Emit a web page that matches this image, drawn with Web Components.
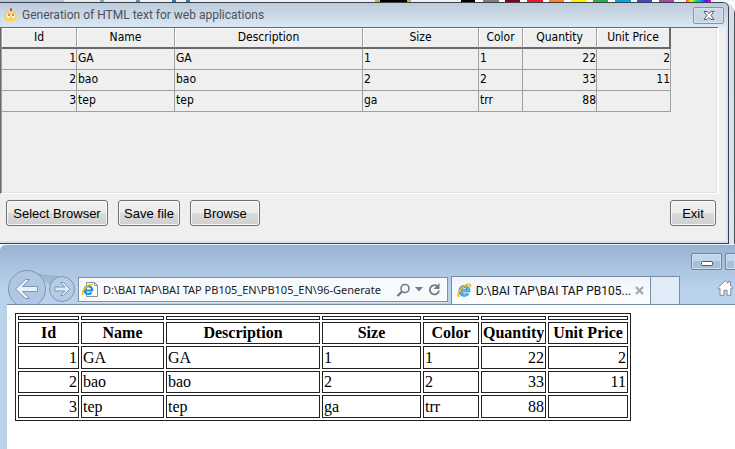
<!DOCTYPE html>
<html lang="en">
<head>
<meta charset="utf-8">
<title>Generation of HTML text for web applications</title>
<style>
html, body { margin: 0; height: 100%; }
body { overflow: hidden; background: #fff; font-family: "DejaVu Sans Condensed", "DejaVu Sans", sans-serif; }
</style>
</head>
<body>
<desk-top>
  <color-strip></color-strip>
  <app-window caption="Generation of HTML text for web applications">
    <data-grid></data-grid>
    <push-button slot="actions" style="--w:102px">Select Browser</push-button>
    <push-button slot="actions" style="--w:62px">Save file</push-button>
    <push-button slot="actions" style="--w:70px">Browse</push-button>
    <push-button slot="exit" style="--w:46px">Exit</push-button>
  </app-window>
  <browser-window slot="front" address="D:\BAI TAP\BAI TAP PB105_EN\PB105_EN\96-Generate" tab="D:\BAI TAP\BAI TAP PB105...">
    <report-table></report-table>
  </browser-window>
</desk-top>
<script>
const heads = ["Id", "Name", "Description", "Size", "Color", "Quantity", "Unit Price"];
const rows = [
  ["1", "GA", "GA", "1", "1", "22", "2"],
  ["2", "bao", "bao", "2", "2", "33", "11"],
  ["3", "tep", "tep", "ga", "trr", "88", ""]
];
const numeric = new Set([0, 5, 6]);
const cells = r => r.map((v, i) => `<td${numeric.has(i) ? ' class="n"' : ""}>${v}</td>`).join("");
const bodyRows = rows.map(r => `<tr>${cells(r)}</tr>`).join("");
const headRow = `<tr>${heads.map(h => `<th scope="col">${h}</th>`).join("")}</tr>`;
const colgroup = w => `<colgroup>${w.map(x => `<col style="width:${x}px">`).join("")}</colgroup>`;

function define(name, render) {
  customElements.define(name, class extends HTMLElement {
    constructor() { super(); this.attachShadow({ mode: "open" }); }
    connectedCallback() { this.shadowRoot.innerHTML = render(this); }
  });
}

define("desk-top", () => `
<style>
:host { display: flex; flex-direction: column; height: 100%; }
.back { display: flex; flex-direction: column; flex: none; }
</style>
<div class="back">
  <slot></slot>
</div>
<slot name="front"></slot>`);

define("color-strip", () => `
<style>
:host { display: block; height: 2px; background:
  linear-gradient(90deg, #000 0 14px, #fff 14px 22px, #7f7f7f 22px 38px, #fff 38px 44px, #880015 44px 59px, #fff 59px 66px,
    #ed1c24 66px 82px, #fff 82px 88px, #ff7f27 88px 103px, #fff 103px 110px, #fff200 110px 126px, #fff 126px 132px,
    #22b14c 132px 147px, #fff 147px 154px, #00a2e8 154px 170px, #fff 170px 176px, #3f48cc 176px 191px, #fff 191px 198px,
    #a349a4 198px 213px, #eef5fc 213px 225px, #f40 225px, #fe0 230px, #0e4 235px, #09f 240px, #60f 245px, #f0a 250px, #eef5fc 250px) 461px 0 / 300px 2px no-repeat,
  linear-gradient(90deg, #dba74e 0 5px, #000 5px 32px, #dba74e 32px 36px, transparent 36px) 375px 0 / 40px 2px no-repeat,
  linear-gradient(90deg, #b4c6de 0 64px, #e6edf5 64px 100px, #8ea5b8 100px 104px, #e6edf5 104px 136px, #6a8ba8 136px 140px,
    #eaf1f8 140px 172px, #2c7db1 172px 176px, #eaf1f8 176px 186px, #2c7db1 186px 190px, #eaf1f8 190px); }
</style>`);

define("app-window", el => `
<style>
:host { display: block; padding-right: 6px; border-radius: 0 12px 0 0;
  background: linear-gradient(#4a4f55, #4a4f55) right / 1px 100% no-repeat, linear-gradient(#d3deea, #dbe6f4); }
.win { border: 1px solid #3c4148; border-width: 1px 1px 1px 0; border-radius: 0 6px 0 0; background: #efefef; overflow: hidden; }
header { display: flex; align-items: center; gap: 4px; height: 24px; padding: 0 4px;
  background: linear-gradient(#bccbda, #dbe7f4); color: #4b525b; }
header svg { flex: none; }
h1 { flex: 1; margin: 0; font: 12px Roboto, sans-serif; white-space: nowrap; }
.close { display: grid; place-items: center; width: 31px; height: 17px; padding: 0; border: 1px solid #8795aa; border-radius: 2px; background: #c9d6e4; box-shadow: inset 0 0 0 1px #d8e2ee; }
.client { border-right: 2px solid #d6e2f1; border-bottom: 2px solid #d6e2f1; padding-right: 7px; }
.grid { height: 165px; border: 1px solid #696969; border-right-color: #fff; border-bottom-color: #fff; border-width: 1px 2px 1px 1px; box-shadow: inset 1px 0 #a0a0a0, inset -1px -1px #e3e3e3; padding-left: 1px; }
footer { display: flex; gap: 10px; padding: 6px 3px 15px 6px; }
.fill { flex: 1; }
</style>
<section class="win" aria-label="${el.getAttribute("caption")}">
  <header>
    <svg width="14" height="14" viewBox="0 0 14 14"><path d="M2 6 3 3l2 2 2-3 2 3 2-2 1 3c2 3 1 7-3 7H4C0 13 0 9 2 6Z" fill="#fbd44c"/><path d="M3 6h8v3c-1 2-7 2-8 0Z" fill="#fff2c7"/><path d="M7 0v3M6 2h2M5 6v2M9 6v2" stroke="#c34a38" stroke-width="1.4"/><path d="M6 9h2l-1 2Z" fill="#e8832c"/></svg>
    <h1>${el.getAttribute("caption")}</h1>
    <button class="close" type="button" aria-label="Close"><svg width="12" height="9" viewBox="0 0 12 9"><path d="M1 .5h3l2 2 2-2h3L8 4.500l3 4H8l-2-2-2 2H1l3-4Z" fill="#fff" stroke="#555e6a"/></svg></button>
  </header>
  <div class="client">
    <div class="grid"><slot></slot></div>
    <footer><slot name="actions"></slot><span class="fill"></span><slot name="exit"></slot></footer>
  </div>
</section>`);

define("push-button", () => `
<style>
:host { display: block; width: var(--w); }
button { width: 100%; height: 26px; padding: 0; border: 1px solid #707070; border-radius: 3px; color: #000;
  background: linear-gradient(#f2f2f2 0, #ebebeb 50%, #dbdbdb 50%, #cfcfcf 100%); box-shadow: inset 0 0 0 1px #f8f8f8;
  font: 13px "Liberation Sans", Arial, sans-serif; white-space: nowrap; }
</style>
<button type="button"><slot></slot></button>`);

define("data-grid", () => `
<style>
:host { display: block; }
table { table-layout: fixed; width: 669px; border-collapse: separate; border-spacing: 0; font: 12px "DejaVu Sans Condensed", Tahoma, sans-serif; color: #000; }
th, td { box-sizing: border-box; height: 21px; padding: 0 1px 2px; text-align: left; border-right: 1px solid #a0a0a0; line-height: 16px; white-space: nowrap; }
th { padding: 1px 0 2px; font-weight: 400; text-align: center; border-bottom: 2px solid #696969; box-shadow: inset 1px 1px #fff; }
th:last-child { border-right: 2px solid #696969; }
td { border-bottom: 1px solid #a0a0a0; }
.n { text-align: right; padding-right: 0; }
</style>
<table>${colgroup([75, 98, 188, 116, 44, 74, 74])}<thead>${headRow}</thead><tbody>${bodyRows}</tbody></table>`);

define("browser-window", el => `
<style>
:host { display: flex; flex: 1; flex-direction: column; min-height: 0; overflow: hidden; box-sizing: border-box;
  border-top: 1px solid #edf3fa; border-radius: 6px 0 0 0; background: linear-gradient(#98b3d2, #b9d1ea 42px, #b9d1ea); }
.chrome { display: flex; flex: none; height: 59px; padding-left: 7px; overflow: hidden; }
.nav { flex: none; width: 71px; }
.nav svg { display: block; margin-top: 23px; }
.bar { box-sizing: border-box; display: flex; align-items: center; align-self: flex-end; flex: none; width: 370px; height: 25px; margin-bottom: 2px; padding: 0 5px 0 3px; gap: 4px;
  border: 1px solid #7b8ca3; background: #f7fafd; box-shadow: inset 0 0 0 1px #fff, 0 1px #d7e4f3; }
input { flex: 1; min-width: 0; height: 20px; padding: 0; border: 0; outline: 0; background: none; color: #222; font: 11px "Noto Sans", sans-serif; }
.bar button, .tab .x { display: grid; place-items: center; flex: none; padding: 0; border: 0; background: none; }
.tab { box-sizing: border-box; display: flex; align-items: center; align-self: flex-end; flex: none; width: 200px; height: 28px; margin-left: 3px; padding: 0 6px 0 5px; gap: 4px;
  border: 1px solid #7b8ca3; border-bottom: 0; background: linear-gradient(#f0f5fb, #fcfdff); }
.tab span { flex: 1; font: 12px Roboto, sans-serif; color: #111; white-space: nowrap; }
.new { box-sizing: border-box; align-self: flex-end; flex: none; width: 29px; height: 28px; padding: 0; border: 1px solid #7b8ca3; border-width: 1px 1px 0 0; background: #dfecf8; }
.right { display: flex; flex: 1; flex-direction: column; min-width: 55px; align-items: flex-end; justify-content: space-between; overflow: hidden; }
.caps { display: flex; gap: 3px; padding-top: 8px; }
.caps button { box-sizing: border-box; display: grid; place-items: center; width: 31px; height: 17px; padding: 0; border: 1px solid #6c84a3; border-radius: 2px; background: linear-gradient(#c3d5ea 50%, #a6bfdc 50%); box-shadow: inset 0 0 0 1px #cfdff0; }
.caps svg { margin-top: 4px; }
.caps .max { width: 10px; border-right: 0; border-radius: 2px 0 0 2px; }
.home { display: block; height: 25px; margin-right: 1px; padding: 0 0 4px; border: 0; background: none; }
main { flex: 1; margin-left: 7px; padding: 8px; border-top: 1px solid #75879d; background: #fff; min-height: 0; overflow: hidden; }
</style>
<div class="chrome">
  <div class="nav"><svg width="71" height="36" viewBox="7 268 71 36" fill="none" role="img" aria-label="Back and forward">
    <path d="M31 271c8 2 16 7 25 6l4-1-10 9-8-7Z" fill="#9fb9d7"/>
    <path d="M30 271c9 4 18 6 28 5" stroke="#8ea6c2"/>
    <circle cx="27" cy="289" r="18.500" fill="#afc7e2" stroke="#8095af"/><circle cx="62" cy="289" r="12.500" fill="#b4cce6" stroke="#8095af"/>
    <path d="m15.500 289 10-9.500h4l-7 7h15v5h-15l7 7h-4Z" fill="#e9f1fa" stroke="#7f95b0"/>
    <path d="m70 289-6.500-6.500h-3l4.500 4.500h-10v4h10l-4.500 4.500h3Z" fill="#dfeaf6" stroke="#8298b3"/>
  </svg></div>
  <div class="bar">
    <svg width="17" height="17" viewBox="0 0 17 17"><path d="M4.500 1.500h8l3 3v11h-11Z" fill="#fff" stroke="#8a8f96"/><path d="M12.500 1.500v3h3" fill="none" stroke="#8a8f96"/><path d="M2.800 9.500h7.400A3.900 3.900 0 1 0 9.400 11.500" fill="none" stroke="#1f8fdc" stroke-width="2.200"/><path d="M1 14C-1 10 6 2 11 3.500" fill="none" stroke="#f0c419" stroke-width="1.600"/></svg>
    <input type="text" aria-label="Address" value="${el.getAttribute("address")}">
    <button type="button" aria-label="Search"><svg width="15" height="14" viewBox="0 0 15 14" fill="none" stroke="#747b84"><circle cx="9" cy="5.500" r="4" stroke-width="1.600"/><path d="m6 8.500-4.500 4.500" stroke-width="2.400"/></svg></button>
    <button type="button" aria-label="Show list"><svg width="8" height="5" viewBox="0 0 8 5"><path d="M0 0h8L4 4.500Z" fill="#747b84"/></svg></button>
    <button type="button" aria-label="Refresh"><svg width="15" height="14" viewBox="0 0 15 14" fill="none"><path d="M10 3a4.600 4.600 0 1 0 2 4.500" stroke="#747b84" stroke-width="1.800"/><path d="M12.500 0v6h-6Z" fill="#747b84"/></svg></button>
  </div>
  <div class="tab">
    <svg width="17" height="17" viewBox="0 0 17 17"><path d="M4 8.800h9.500A5 5 0 1 0 12.600 11.800" fill="none" stroke="#2d83bd" stroke-width="3.600"/><path d="M4 8.800h9.500A5 5 0 1 0 12.600 11.800" fill="none" stroke="#5fb9e8" stroke-width="2"/><path d="M3 15.500C-2 15 4 5 11 2c5-2 5 1 4 3" fill="none" stroke="#f0b91e" stroke-width="1.800"/></svg>
    <span>${el.getAttribute("tab")}</span>
    <button class="x" type="button" aria-label="Close tab"><svg width="9" height="9" viewBox="0 0 9 9"><path d="m1 1 7 7M8 1 1 8" stroke="#a3a8ad" stroke-width="2.200"/></svg></button>
  </div>
  <button class="new" type="button" aria-label="New tab"></button>
  <div class="right">
    <div class="caps"><button type="button" aria-label="Minimize"><svg width="12" height="5" viewBox="0 0 12 5"><rect x=".5" y=".5" width="11" height="4" rx="1" fill="#fff" stroke="#4d5665"/></svg></button><button class="max" type="button" aria-label="Maximize"></button></div>
    <button class="home" type="button" aria-label="Home"><svg width="17" height="16" viewBox="0 0 17 16"><path d="m.8 8 7.500-7.300 2.700 2.600V1.500h2.500v4.200L16 8l-1.200 1.200-1-.9v7H10v-5H7v5H3V8.300l-1 .9Z" fill="#fff" stroke="#7c8ba0"/></svg></button>
  </div>
</div>
<main><slot></slot></main>`);

define("report-table", () => `
<style>
:host { display: block; }
table { table-layout: fixed; width: 616px; border: 1px solid #222; border-spacing: 2px; border-collapse: separate; font: 16px "Liberation Serif", "Times New Roman", serif; color: #000; }
th, td { box-sizing: border-box; height: 22px; padding: 1px; border: 1px solid #222; line-height: 18px; white-space: nowrap; }
tbody tr:nth-child(odd) td { height: 23px; }
.gap td { height: 4px; line-height: 0; }
.n { text-align: right; }
</style>
<table>${colgroup([61, 83, 154, 99, 56, 65, 80])}<thead><tr class="gap">${"<td></td>".repeat(7)}</tr>${headRow}</thead><tbody>${bodyRows}</tbody></table>`);
</script>
</body>
</html>
